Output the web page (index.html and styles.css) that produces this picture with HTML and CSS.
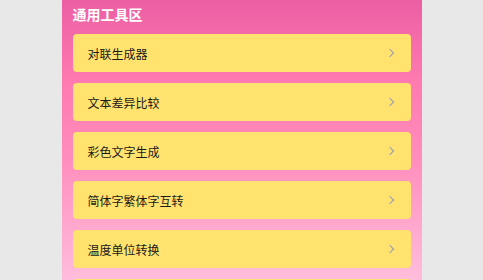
FILE: index.html
```html
<!DOCTYPE html>
<html lang="zh-CN">
<head>
    <meta charset="UTF-8">
    <meta name="viewport" content="width=device-width, initial-scale=1.0">
    <title>通用工具区</title>
    <link rel="stylesheet" href="styles.css">
</head>
<body>
    <div class="page">
        <div class="section-title">通用工具区</div>
        <div class="tool-list">
            <div class="tool-item"><span>对联生成器</span><span class="arrow"></span></div>
            <div class="tool-item"><span>文本差异比较</span><span class="arrow"></span></div>
            <div class="tool-item"><span>彩色文字生成</span><span class="arrow"></span></div>
            <div class="tool-item"><span>简体字繁体字互转</span><span class="arrow"></span></div>
            <div class="tool-item"><span>温度单位转换</span><span class="arrow"></span></div>
            <div class="tool-item"></div>
        </div>
    </div>
</body>
</html>
```

FILE: styles.css
```css
body {
    margin: 0;
    padding: 0;
    background-color: #e8e8e8;
    font-family: "Noto Sans CJK SC", "Noto Sans", sans-serif;
    height: 100vh;
    overflow: hidden;
}

.page {
    width: 360px;
    height: 100%;
    margin: 0 auto;
    padding: 4px 11px 0;
    box-sizing: border-box;
    background: linear-gradient(to bottom, #ec5fa4 0%, #ff7bb0 30%, #ff8cbb 55%, #ffbddb 100%);
}

.section-title {
    color: #fff;
    font-size: 14px;
    font-weight: bold;
    line-height: 20px;
    margin-bottom: 10px;
}

.tool-list {
    display: flex;
    flex-direction: column;
    gap: 11px;
}

.tool-item {
    height: 38px;
    flex-shrink: 0;
    background-color: #ffe36e;
    border-radius: 4px;
    display: flex;
    align-items: center;
    justify-content: space-between;
    padding: 0 17px 0 15px;
    font-size: 12px;
    color: #1a1a1a;
}

.arrow {
    width: 5px;
    height: 5px;
    border-top: 1px solid #9a9cb4;
    border-right: 1px solid #9a9cb4;
    transform: rotate(45deg);
    margin-right: 1px;
}
```
